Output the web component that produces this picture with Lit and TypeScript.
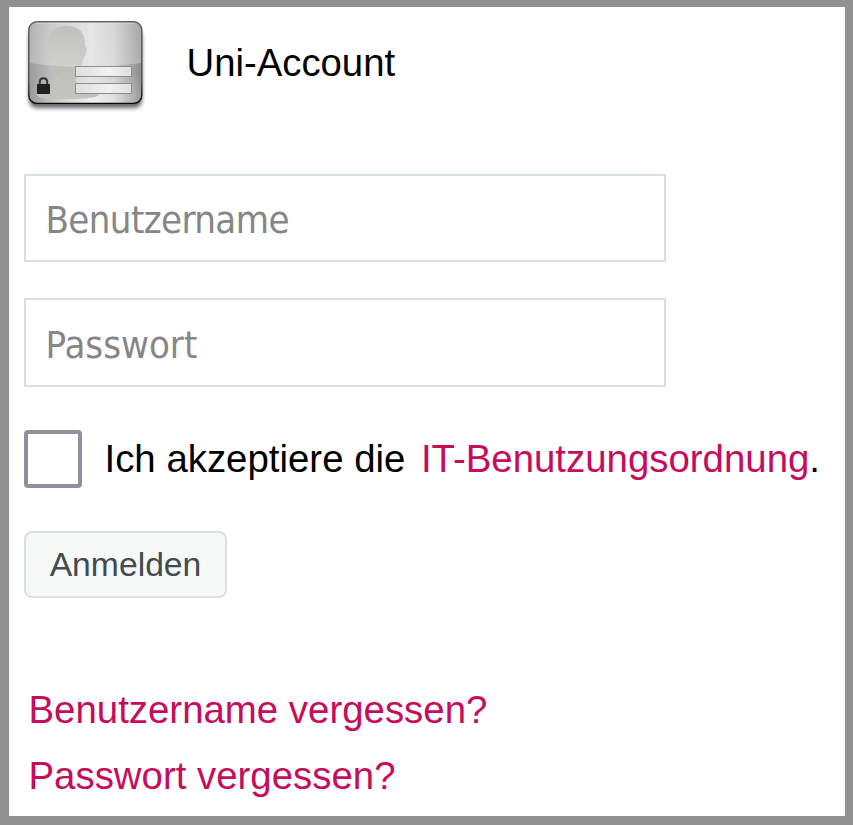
import { LitElement, html, css } from "lit";
import { customElement } from "lit/decorators.js";

@customElement("account-icon")
class AccountIcon extends LitElement {
  static styles = css`
    :host { display: block; width: 124px; height: 96px; }
    svg { display: block; }
  `;
  render() {
    return html`
      <svg width="124" height="96" viewBox="0 0 124 96" aria-hidden="true">
        <defs>
          <linearGradient id="card" x1="0" y1="0" x2="1" y2="0">
            <stop offset="0" stop-color="#9a9a9a" />
            <stop offset=".2" stop-color="#bcbcbc" />
            <stop offset=".55" stop-color="#dedede" />
            <stop offset=".75" stop-color="#cccccc" />
            <stop offset="1" stop-color="#8c8c8c" />
          </linearGradient>
          <radialGradient id="glow" cx=".6" cy="1" r=".5">
            <stop offset="0" stop-color="#fff" stop-opacity=".55" />
            <stop offset="1" stop-color="#fff" stop-opacity="0" />
          </radialGradient>
          <linearGradient id="gloss" x1="0" y1="0" x2="0" y2="1">
            <stop offset="0" stop-color="#fff" stop-opacity=".22" />
            <stop offset="1" stop-color="#fff" stop-opacity=".28" />
          </linearGradient>
          <linearGradient id="head" x1="0" y1="0" x2="0" y2="1">
            <stop offset="0" stop-color="#adada8" />
            <stop offset=".55" stop-color="#bebeb9" />
            <stop offset="1" stop-color="#c4c4be" />
          </linearGradient>
          <linearGradient id="edge" x1="0" y1="0" x2="0" y2="1">
            <stop offset="0" stop-color="#606060" />
            <stop offset=".7" stop-color="#505050" />
            <stop offset="1" stop-color="#080808" />
          </linearGradient>
          <linearGradient id="field" x1="0" y1="0" x2="1" y2="0">
            <stop offset="0" stop-color="#dededb" />
            <stop offset=".6" stop-color="#f2f2f2" />
            <stop offset="1" stop-color="#dedede" />
          </linearGradient>
          <filter id="soft" x="-10%" y="-10%" width="120%" height="130%">
            <feGaussianBlur stdDeviation="2" />
          </filter>
        </defs>
        <rect x="5" y="9" width="113" height="79" rx="8" fill="#000" opacity=".6" filter="url(#soft)" />
        <rect x="4.6" y="1.6" width="113.2" height="82" rx="8" fill="url(#card)" />
        <rect x="5" y="2" width="112.5" height="81" rx="8" fill="url(#glow)" />
        <path d="M37 79 C26 79 14 79 13 75 C13 70 30 66 33 62 Q34.5 59 33 56 Q27 47 25.5 38 Q23 36 22.5 31 Q22 27 24 26 Q22 6 42 6 Q62 6 61 26 Q63 27 62.5 31 Q62 36 59.5 38 Q57 50 52 57 Q51 61 53 64 C57 68 75 70 75 74 C74 79 53 79 37 79Z" fill="url(#head)" />
        <path d="M5.5 10 Q5.5 2.5 13 2.5 H109.5 Q117 2.5 117 10 V43 Q61 51 5.5 43Z" fill="url(#gloss)" />
        <rect x="4.8" y="1.8" width="113" height="81.6" rx="8" fill="none" stroke="url(#edge)" stroke-width="1.4" />
        <path d="M12 3.2 H111" stroke="#e5e5e5" stroke-width="1" opacity=".55" />
        <rect x="51.5" y="46.5" width="56" height="10" fill="url(#field)" stroke="#8d8d8b" />
        <rect x="51.5" y="63.5" width="56" height="10" fill="url(#field)" stroke="#8d8d8b" />
        <path d="M15.8 65.5 V62 Q15.8 58.2 19.5 58.2 Q23.2 58.2 23.2 62 V65.5" fill="none" stroke="#343434" stroke-width="2" />
        <rect x="13" y="64" width="13" height="10" rx=".8" fill="#202020" />
      </svg>
    `;
  }
}

@customElement("app-root")
class AppRoot extends LitElement {
  static styles = css`
    :host {
      display: block;
      box-sizing: border-box;
      height: 825px;
      border: solid #919191;
      border-width: 7px 8px 9px 9px;
      background: #fff;
      color: #000;
      font: 38.4px/66px "Liberation Sans", Arial, sans-serif;
      overflow: hidden;
    }
    * { box-sizing: border-box; }
    form { display: flex; flex-direction: column; align-items: flex-start; padding: 13px 0 0 15px; }
    .header { display: flex; height: 96px; margin-bottom: 58px; }
    .title { margin: 10px 0 0 38.5px; font-size: 38.3px; font-weight: 400; line-height: 66px; }
    .field {
      display: block;
      width: 642px;
      height: 88px;
      margin: 0 0 36px;
      padding: 4px 18px 0 19.5px;
      border: 2px solid #d9e1df;
      border-radius: 0;
      background: #fff;
      outline: none;
      font: 38px "DejaVu Sans Condensed", "DejaVu Sans", sans-serif;
      font-stretch: condensed;
      letter-spacing: -0.6px;
    }
    .password { height: 89px; margin-bottom: 43px; letter-spacing: 0; }
    .field::placeholder { color: #868686; opacity: 1; }
    .terms { display: flex; align-items: center; height: 58px; margin-bottom: 43px; white-space: nowrap; }
    .check {
      appearance: none;
      width: 58px;
      height: 58px;
      margin: 0 22.5px 0 0;
      border: 4px solid #8f8f9d;
      border-radius: 4px;
      background: #fff;
    }
    a { color: #c60c5b; text-decoration: none; }
    .rules { margin-left: 15.5px; }
    .submit {
      width: 203px;
      height: 67px;
      margin: 0 0 79px;
      padding: 0;
      border: 2px solid #d9e1df;
      border-radius: 8px;
      background: #f7f9f9;
      color: #434b4d;
      font: 33.7px "Liberation Sans", Arial, sans-serif;
    }
    .links { display: flex; flex-direction: column; padding-left: 4.5px; }
  `;
  render() {
    return html`
      <form @submit=${(e: Event) => e.preventDefault()}>
        <div class="header">
          <account-icon></account-icon>
          <h1 class="title">Uni-Account</h1>
        </div>
        <input class="field" type="text" placeholder="Benutzername" />
        <input class="field password" type="password" placeholder="Passwort" />
        <div class="terms">
          <input class="check" type="checkbox" aria-label="Ich akzeptiere die IT-Benutzungsordnung" />
          <span>Ich akzeptiere die</span><a class="rules" href="#">IT-Benutzungsordnung</a><span>.</span>
        </div>
        <button class="submit">Anmelden</button>
        <div class="links">
          <a href="#">Benutzername vergessen?</a>
          <a href="#">Passwort vergessen?</a>
        </div>
      </form>
    `;
  }
}
